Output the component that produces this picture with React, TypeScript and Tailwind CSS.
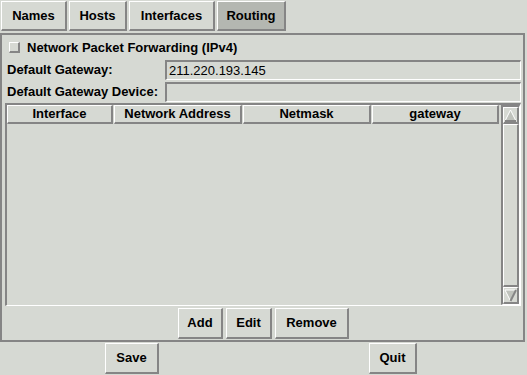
////////////////////////////////////////////////////////////////////////////////
// [NetConfig] Tk-style network settings, routing tab
////////////////////////////////////////////////////////////////////////////////

const raised =
  "border-t border-l border-t-white border-l-white border-r-2 border-b-2 border-r-[#858585] border-b-[#858585]";
const sunken =
  "border-t-2 border-l-2 border-t-[#858585] border-l-[#858585] border-r border-b border-r-white border-b-white";

function Btn({ label, className = "" }: { label: string; className?: string }) {
  return (
    <div
      className={`flex items-center justify-center bg-[#d6d9d3] text-[13px] font-bold text-black ${raised} ${className}`}
    >
      {label}
    </div>
  );
}

function Entry({ value }: { value?: string }) {
  return (
    <div
      className={`flex h-[20px] w-[356px] items-center bg-[#d6d9d3] pl-[2px] text-[13px] text-black ${sunken}`}
    >
      {value}
    </div>
  );
}

export default function App() {
  const columns = [
    { name: "Interface", w: "w-[106px]" },
    { name: "Network Address", w: "w-[128px]" },
    { name: "Netmask", w: "w-[128px]" },
    { name: "gateway", w: "w-[127px]" },
  ];

  return (
    <div
      className="flex h-[375px] w-[527px] flex-col overflow-hidden bg-[#d6d9d3] text-black"
      style={{ fontFamily: '"Liberation Sans", Arial, sans-serif' }}
    >
      {/* Tabs */}
      <div className="flex pt-[1px]">
        <Btn label="Names" className="ml-[1px] h-[30px] w-[66px]" />
        <Btn label="Hosts" className="ml-[2px] h-[30px] w-[58px]" />
        <Btn label="Interfaces" className="ml-[2px] h-[30px] w-[86px]" />
        <Btn label="Routing" className="ml-[2px] h-[30px] w-[69px] !bg-[#b4b7b1]" />
      </div>

      {/* Routing frame */}
      <div className="mt-[2px] flex h-[309px] w-[525px] flex-col border-2 border-[#858585] pl-[3px] pr-[2px]">
        <div className="flex h-[24px] items-center gap-[7px] pl-[4px] pt-[1px]">
          <div className={`h-[11px] w-[11px] bg-[#d6d9d3] ${raised}`} />
          <span className="text-[13px] font-bold">Network Packet Forwarding (IPv4)</span>
        </div>

        <div className="flex h-[22px] items-center">
          <span className="w-[160px] pl-[2px] text-[13px] font-bold">Default Gateway:</span>
          <Entry value="211.220.193.145" />
        </div>
        <div className="flex h-[22px] items-center">
          <span className="w-[160px] pl-[2px] text-[13px] font-bold">Default Gateway Device:</span>
          <Entry />
        </div>

        {/* List */}
        <div className={`flex h-[203px] w-[516px] ${sunken}`}>
          <div className="flex flex-1 flex-col">
            <div className="flex h-[19px] gap-[1px]">
              {columns.map((c) => (
                <Btn key={c.name} label={c.name} className={`h-[19px] ${c.w}`} />
              ))}
            </div>
            <div className="flex-1" />
          </div>
          {/* Scrollbar */}
          <div className={`flex w-[19px] flex-col ${sunken} border-t-0`}>
            <div className={`flex h-[17px] items-center justify-center ${raised}`}>
              <svg width="13" height="13" viewBox="0 0 13 13">
                <path d="M6.5 1 L12 12 L1 12 Z" fill="#bfc2bc" stroke="#ffffff" strokeWidth="1" />
                <path d="M12 12 L1 12" stroke="#858585" strokeWidth="2" />
              </svg>
            </div>
            <div className={`flex-1 bg-[#d6d9d3] ${raised}`} />
            <div className={`flex h-[17px] items-center justify-center ${raised}`}>
              <svg width="13" height="13" viewBox="0 0 13 13">
                <path d="M1 1 L12 1 L6.5 12 Z" fill="#bfc2bc" stroke="#ffffff" strokeWidth="1" />
                <path d="M12 1 L6.5 12" stroke="#858585" strokeWidth="2" />
              </svg>
            </div>
          </div>
        </div>

        {/* List buttons */}
        <div className="flex justify-center gap-[3px] pt-[2px] pl-[1px]">
          <Btn label="Add" className="h-[31px] w-[45px]" />
          <Btn label="Edit" className="h-[31px] w-[46px]" />
          <Btn label="Remove" className="h-[31px] w-[74px]" />
        </div>
      </div>

      {/* Bottom */}
      <div className="flex pt-[1px]">
        <Btn label="Save" className="ml-[105px] h-[31px] w-[54px]" />
        <Btn label="Quit" className="ml-[210px] h-[31px] w-[48px]" />
      </div>
    </div>
  );
}
